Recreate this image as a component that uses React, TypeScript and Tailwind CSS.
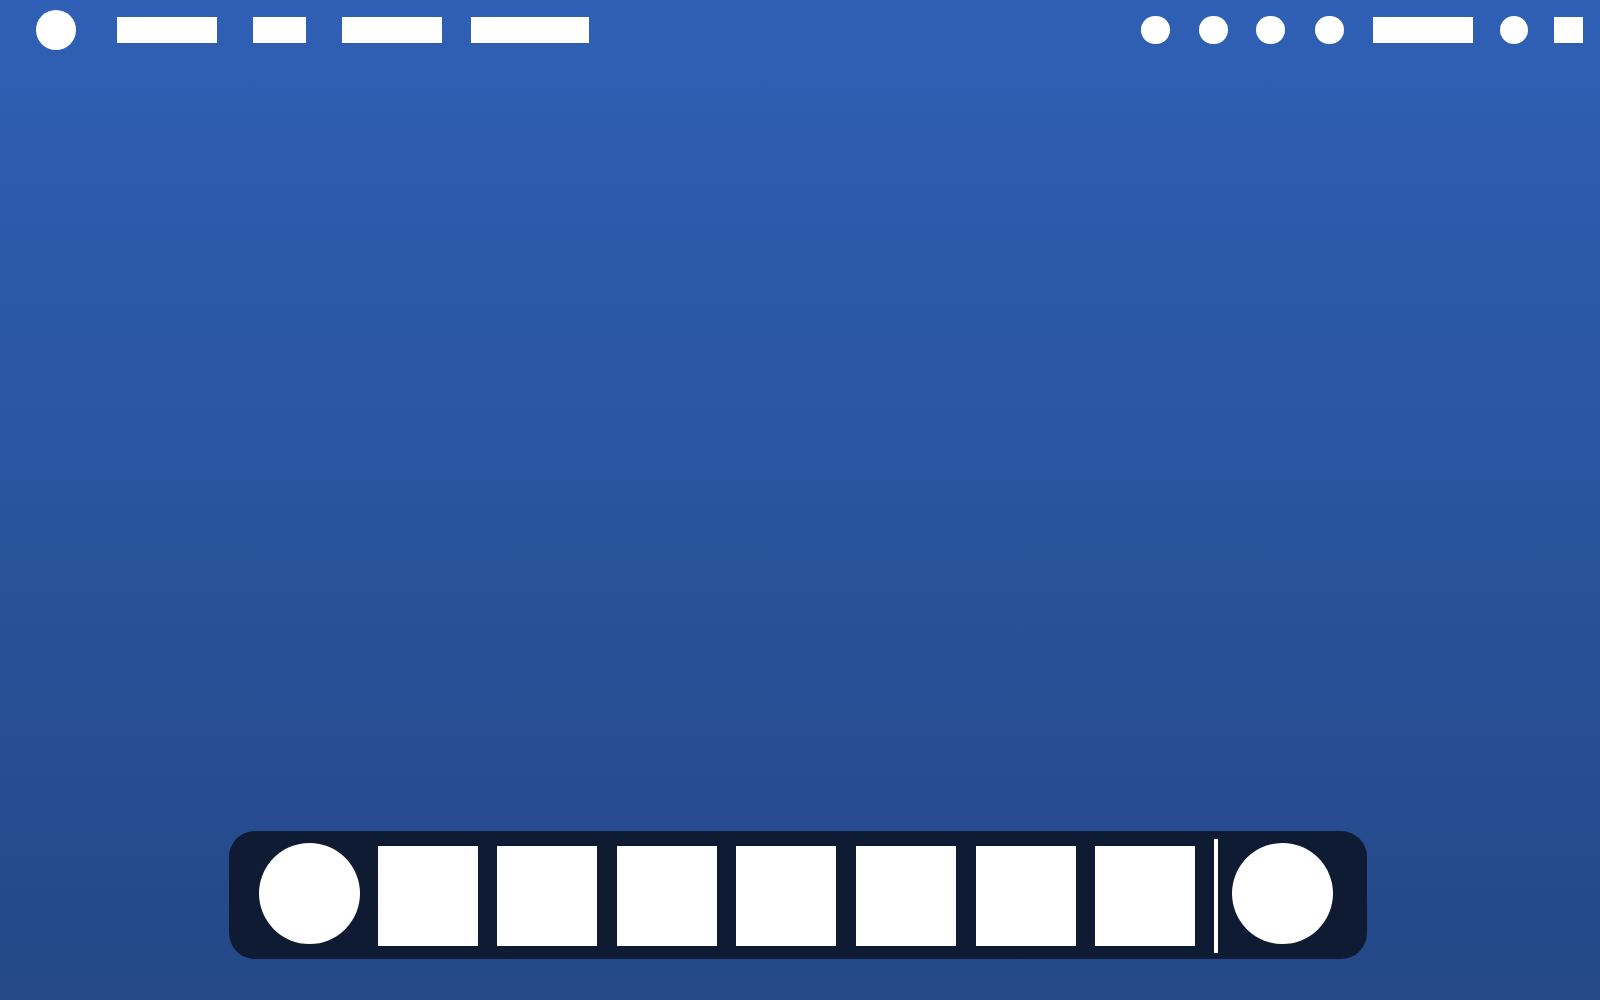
function Dot({ size }: { size: string }) {
  return <div className={`${size} rounded-full bg-white shrink-0`} />;
}

function Bar({ width }: { width: string }) {
  return <div className={`${width} h-[26px] bg-white shrink-0`} />;
}

function TopBar() {
  return (
    <div className="flex items-center justify-between h-[60px] pl-9 pr-[17px]">
      <div className="flex items-center">
        <Dot size="w-10 h-10" />
        <div className="ml-[41px]"><Bar width="w-[100px]" /></div>
        <div className="ml-[36px]"><Bar width="w-[53px]" /></div>
        <div className="ml-[36px]"><Bar width="w-[100px]" /></div>
        <div className="ml-[29px]"><Bar width="w-[118px]" /></div>
      </div>
      <div className="flex items-center">
        <Dot size="w-[28.7px] h-[28.7px]" />
        <div className="ml-[29px]"><Dot size="w-[28.7px] h-[28.7px]" /></div>
        <div className="ml-[28.6px]"><Dot size="w-[28.7px] h-[28.7px]" /></div>
        <div className="ml-[30.3px]"><Dot size="w-[28.7px] h-[28.7px]" /></div>
        <div className="ml-[29px]"><Bar width="w-[100px]" /></div>
        <div className="ml-[26.7px]"><Dot size="w-[28.7px] h-[28.7px]" /></div>
        <div className="ml-[25.6px]"><Bar width="w-[29px]" /></div>
      </div>
    </div>
  );
}

const apps = [1, 2, 3, 4, 5, 6, 7];

function Dock() {
  return (
    <div className="flex justify-center pb-[41px]">
      <div className="ml-[-5px] flex items-start h-[128px] w-[1138px] pl-[30px] pr-[33px] rounded-[26px] bg-[#0f1b33]">
        <div className="mt-[12px] w-[101px] h-[101px] rounded-full bg-white shrink-0" />
        <div className="ml-[18px] mt-[14.6px] flex items-start gap-[19.67px]">
          {apps.map((a) => (
            <div key={a} className="w-[100px] h-[100px] bg-white" />
          ))}
        </div>
        <div className="ml-[18.3px] mt-[7.6px] w-[4px] h-[114px] bg-white shrink-0" />
        <div className="ml-[14.3px] mt-[12px] w-[101px] h-[101px] rounded-full bg-white shrink-0" />
      </div>
    </div>
  );
}

export default function App() {
  return (
    <div className="w-[1600px] h-[1000px] flex flex-col justify-between bg-gradient-to-b from-[#2f60b5] to-[#244887] overflow-hidden">
      <TopBar />
      <Dock />
    </div>
  );
}
